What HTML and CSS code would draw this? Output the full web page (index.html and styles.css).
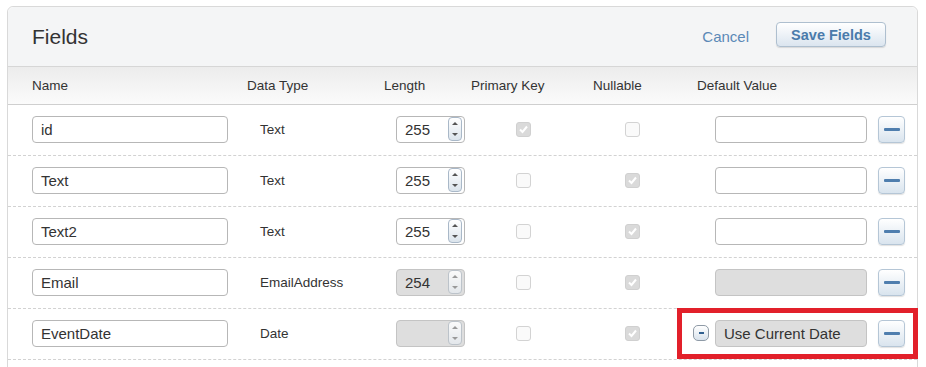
FILE: index.html
```html
<!DOCTYPE html>
<html lang="en">
<head>
<meta charset="UTF-8">
<title>Fields</title>
<link rel="stylesheet" href="styles.css">
</head>
<body>
<div class="panel">
<div class="panel-head">
<h2>Fields</h2>
<div class="actions">
<a class="cancel" href="#">Cancel</a>
<button class="btn-save">Save Fields</button>
</div>
</div>
<div class="row head-row">
<div>Name</div>
<div>Data Type</div>
<div>Length</div>
<div>Primary Key</div>
<div>Nullable</div>
<div>Default Value</div>
</div>

<div class="row">
<div><div class="txt name-box">id</div></div>
<div class="dtype">Text</div>
<div><div class="txt len-box"><span>255</span><span class="spin"><i class="up"></i><i class="down"></i></span></div></div>
<div class="pk"><span class="chk on"></span></div>
<div class="nl"><span class="chk"></span></div>
<div class="def"><div class="txt def-box"></div><button class="btn-minus"><i></i></button></div>
</div>

<div class="row">
<div><div class="txt name-box">Text</div></div>
<div class="dtype">Text</div>
<div><div class="txt len-box"><span>255</span><span class="spin"><i class="up"></i><i class="down"></i></span></div></div>
<div class="pk"><span class="chk"></span></div>
<div class="nl"><span class="chk on"></span></div>
<div class="def"><div class="txt def-box"></div><button class="btn-minus"><i></i></button></div>
</div>

<div class="row">
<div><div class="txt name-box">Text2</div></div>
<div class="dtype">Text</div>
<div><div class="txt len-box"><span>255</span><span class="spin"><i class="up"></i><i class="down"></i></span></div></div>
<div class="pk"><span class="chk"></span></div>
<div class="nl"><span class="chk on"></span></div>
<div class="def"><div class="txt def-box"></div><button class="btn-minus"><i></i></button></div>
</div>

<div class="row">
<div><div class="txt name-box">Email</div></div>
<div class="dtype">EmailAddress</div>
<div><div class="txt len-box disabled"><span>254</span><span class="spin"><i class="up"></i><i class="down"></i></span></div></div>
<div class="pk"><span class="chk"></span></div>
<div class="nl"><span class="chk on"></span></div>
<div class="def"><div class="txt def-box disabled"></div><button class="btn-minus"><i></i></button></div>
</div>

<div class="row">
<div><div class="txt name-box">EventDate</div></div>
<div class="dtype">Date</div>
<div><div class="txt len-box disabled"><span></span><span class="spin"><i class="up"></i><i class="down"></i></span></div></div>
<div class="pk"><span class="chk"></span></div>
<div class="nl"><span class="chk on"></span></div>
<div class="def">
<button class="btn-small"><i></i></button>
<div class="txt def-box disabled">Use Current Date</div>
<button class="btn-minus"><i></i></button>
<span class="highlight"></span>
</div>
</div>
</div>
</body>
</html>
```

FILE: styles.css
```css
body {
margin: 0;
padding: 6px 8px 0 7px;
background-color: #fff;
color: #333;
font-family: "Liberation Sans", Arial, sans-serif;
overflow: hidden;
}
.panel {
border: 1px solid #d9d9d9;
border-radius: 6px 6px 0 0;
background-color: #fff;
padding-bottom: 60px;
}
.panel-head {
display: flex;
align-items: center;
justify-content: space-between;
height: 59px;
padding: 0 31px 0 24px;
background-color: #f4f5f6;
border-bottom: 1px solid #d6d6d6;
border-radius: 6px 6px 0 0;
}
.panel-head h2 {
margin: 0;
font-size: 21px;
font-weight: normal;
color: #333;
}
.actions {
display: flex;
align-items: center;
gap: 27px;
}
.cancel {
color: #5b89b7;
font-size: 15px;
text-decoration: none;
}
.btn-save {
width: 110px;
height: 25px;
margin-bottom: 4px;
padding: 0;
font-family: inherit;
font-size: 14.5px;
font-weight: bold;
color: #4a7bab;
background: linear-gradient(#ffffff, #dbe5ef);
border: 1px solid #aebfcf;
border-radius: 4px;
box-shadow: 0 1px 1px rgba(0, 0, 0, 0.12);
}
.row {
display: grid;
grid-template-columns: 215px 137px 87px 122px 104px minmax(0, 1fr);
align-items: center;
padding-left: 24px;
padding-bottom: 2px;
height: 48px;
border-bottom: 1px dashed #d2d2d2;
}
.head-row {
height: 37px;
padding-bottom: 0;
font-size: 13.5px;
background: linear-gradient(#ececec, #fbfbfb);
border-bottom: 1px solid #cfcfcf;
}
.txt {
box-sizing: border-box;
height: 27px;
border: 1px solid #b7b7b7;
border-radius: 4px;
background-color: #fff;
font-size: 15px;
line-height: 25px;
padding-left: 8px;
}
.txt.disabled {
background-color: #dedede;
border-color: #c4c4c4;
}
.name-box {
width: 196px;
}
.dtype {
padding-left: 13px;
font-size: 13.5px;
}
.len-box {
width: 69px;
margin-left: 12px;
display: flex;
align-items: center;
justify-content: space-between;
padding-right: 2px;
}
.spin {
box-sizing: border-box;
width: 14px;
height: 24px;
border: 1px solid #a9b8c8;
border-radius: 4px;
background: linear-gradient(#ffffff, #dbe4ec);
display: flex;
flex-direction: column;
align-items: center;
justify-content: space-around;
}
.disabled .spin {
border-color: #bcc3ca;
background: linear-gradient(#fafafa, #e3e7eb);
}
.spin i {
width: 0;
height: 0;
border-left: 3px solid transparent;
border-right: 3px solid transparent;
}
.spin .up {
border-bottom: 3px solid #555;
}
.spin .down {
border-top: 3px solid #555;
}
.disabled .spin .up {
border-bottom-color: #999;
}
.disabled .spin .down {
border-top-color: #999;
}
.chk {
display: block;
box-sizing: border-box;
width: 15px;
height: 15px;
border: 1px solid #d3d3d3;
border-radius: 3px;
background-color: #fafafa;
}
.chk.on {
background: #dadada url("data:image/svg+xml;utf8,<svg xmlns='http://www.w3.org/2000/svg' width='13' height='13'><path d='M3 6.5 L5.5 9 L10 3.5' fill='none' stroke='white' stroke-width='2'/></svg>") center no-repeat;
border-color: #d0d0d0;
}
.pk {
padding-left: 45px;
}
.nl {
padding-left: 32px;
}
.def {
position: relative;
display: flex;
align-items: center;
justify-content: flex-end;
padding-right: 12px;
height: 100%;
min-width: 0;
}
.def > * {
flex-shrink: 0;
}
.def-box {
width: 152px;
}
.btn-minus {
width: 27px;
height: 27px;
margin-left: 11px;
padding: 0;
display: flex;
align-items: center;
justify-content: center;
background: linear-gradient(#ffffff, #d9e4ee);
border: 1px solid #b5c6d6;
border-radius: 4px;
box-shadow: 0 1px 1px rgba(0, 0, 0, 0.12);
}
.btn-minus i {
width: 16px;
height: 3px;
border-radius: 1px;
background-color: #4f7eae;
}
.btn-small {
width: 16px;
height: 16px;
margin-right: 6px;
padding: 0;
display: flex;
align-items: center;
justify-content: center;
background: linear-gradient(#ffffff, #d8e2ec);
border: 1px solid #8e9aa6;
border-radius: 5px;
}
.btn-small i {
width: 5px;
height: 1.5px;
background-color: #2f5f8f;
}
/* annotation box over the last default value */
.def .highlight {
position: absolute;
left: -20px;
right: -1px;
top: -1px;
bottom: -2px;
border: 5px solid #e2202a;
}
```
